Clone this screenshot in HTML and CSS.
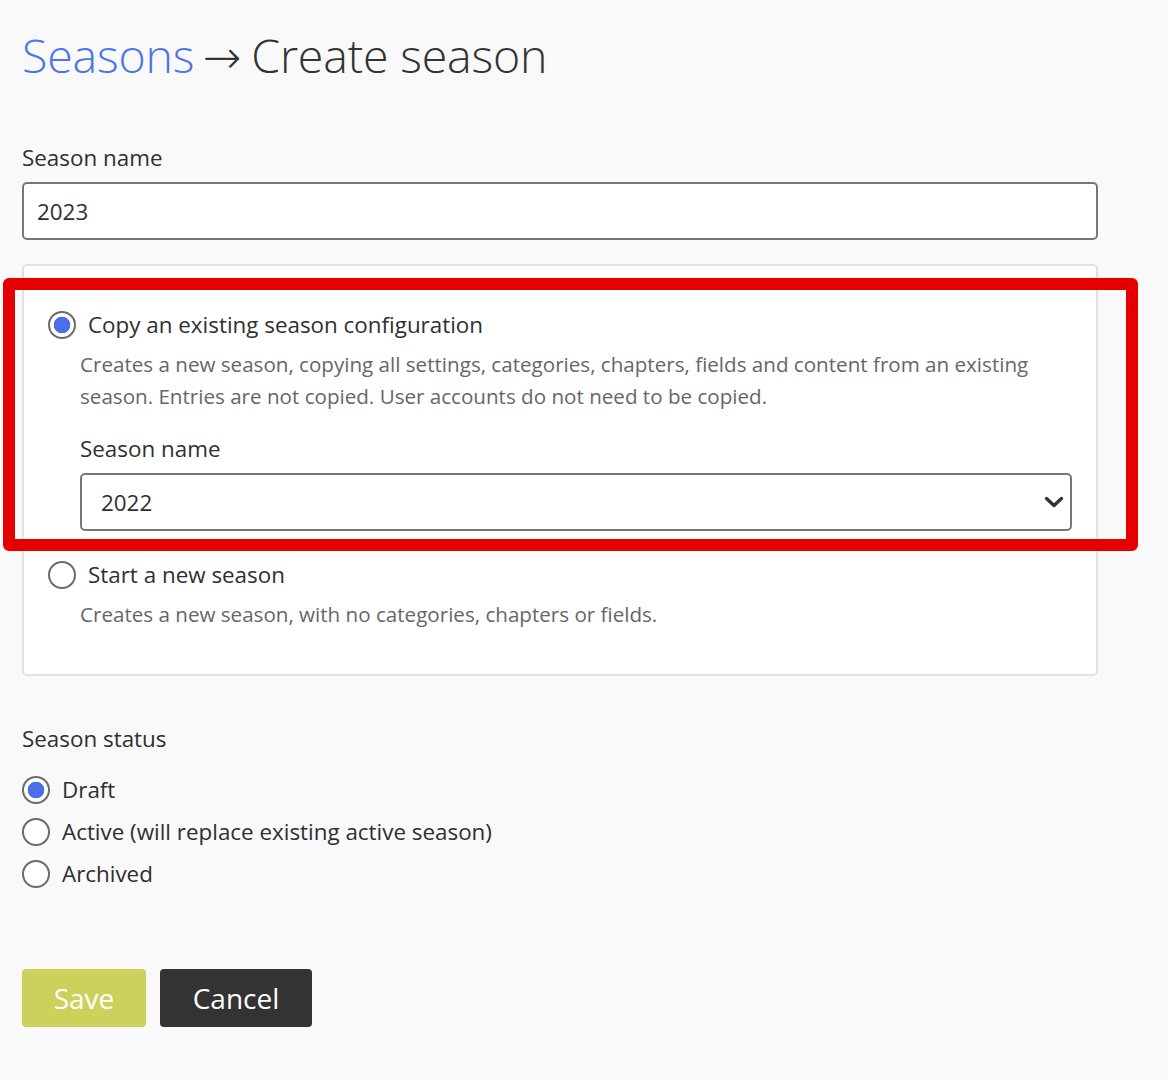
FILE: index.html
```html
<!DOCTYPE html>
<html lang="en">
<head>
<meta charset="utf-8">
<title>Create season</title>
<link rel="stylesheet" href="styles.css">
</head>
<body>
<main class="page">
  <h1 class="title"><a class="crumb" href="#">Seasons</a> <span class="arrow">→</span> Create season</h1>

  <div class="field">
    <label class="label" for="name">Season name</label>
    <input class="input" id="name" type="text" value="2023">
  </div>

  <div class="box">
    <div class="option">
      <label class="radio-row">
        <input class="radio" type="radio" name="mode" checked>
        <span>Copy an existing season configuration</span>
      </label>
      <div class="option-body">
        <p class="desc">Creates a new season, copying all settings, categories, chapters, fields and content from an existing season. Entries are not copied. User accounts do not need to be copied.</p>
        <div class="field sub-field">
          <label class="label" for="copy">Season name</label>
          <div class="select-wrap">
            <select class="select" id="copy">
              <option>2022</option>
            </select>
            <svg class="chevron" width="20" height="14" viewBox="0 0 20 14"><path d="M2.5 3.5 L10 10.5 L17.5 3.5" fill="none" stroke="#333" stroke-width="3.4" stroke-linecap="round" stroke-linejoin="round"/></svg>
          </div>
        </div>
      </div>
    </div>
    <div class="option option-second">
      <label class="radio-row">
        <input class="radio" type="radio" name="mode">
        <span>Start a new season</span>
      </label>
      <div class="option-body">
        <p class="desc">Creates a new season, with no categories, chapters or fields.</p>
      </div>
    </div>
  </div>

  <div class="status">
    <div class="label">Season status</div>
    <div class="status-list">
      <label class="radio-row"><input class="radio" type="radio" name="status" checked><span>Draft</span></label>
      <label class="radio-row"><input class="radio" type="radio" name="status"><span>Active (will replace existing active season)</span></label>
      <label class="radio-row"><input class="radio" type="radio" name="status"><span>Archived</span></label>
    </div>
  </div>

  <div class="actions">
    <button class="btn btn-save" type="button">Save</button>
    <button class="btn btn-cancel" type="button">Cancel</button>
  </div>
</main>
<div class="highlight"></div>
</body>
</html>
```
FILE: styles.css
```css
* { box-sizing: border-box; }

html, body {
  margin: 0;
  background: #f9f9f9;
}

body {
  font-family: "Open Sans", "Noto Sans", sans-serif;
  color: #2f2f2f;
  font-size: 22.4px;
  line-height: 30px;
}

.page {
  padding: 25px 70px 40px 22px;
  width: 1168px;
}

.title {
  margin: 0;
  font-weight: 300;
  font-size: 46.5px;
  line-height: 60px;
  color: #333;
  letter-spacing: -0.2px;
}

.crumb {
  color: #4b74ee;
  text-decoration: none;
}

.arrow {
  font-family: "Noto Sans", "DejaVu Sans", sans-serif;
  font-size: 46px;
  font-weight: 300;
  margin: 0 -2px 0 -3px;
}

.field {
  margin-top: 58px;
  display: flex;
  flex-direction: column;
  gap: 9px;
}

.label {
  display: block;
  font-size: 22.4px;
  line-height: 30px;
  color: #2f2f2f;
}

.input {
  height: 58px;
  width: 100%;
  border: 2px solid #777;
  border-radius: 5px;
  background: #fff;
  padding: 0 13px;
  font-family: inherit;
  font-size: 22.4px;
  color: #2f2f2f;
}

.box {
  margin-top: 24px;
  background: #fff;
  border: 2px solid #e2e2e2;
  border-radius: 5px;
  padding: 44px 24px 44px 24px;
}

.option-second {
  margin-top: 29px;
}

.radio-row {
  display: flex;
  align-items: center;
  gap: 12px;
  font-size: 22.4px;
  line-height: 30px;
  color: #2f2f2f;
}

.radio {
  appearance: none;
  -webkit-appearance: none;
  margin: 0;
  width: 28px;
  height: 28px;
  border: 2px solid #6b6b6b;
  border-radius: 50%;
  background: #fff;
  flex: none;
}

.radio:checked {
  background: radial-gradient(circle, #4a6fe8 0 8px, #fff 8.6px);
}

.option-body {
  margin-left: 32px;
}

.desc {
  margin: 8px 0 0 0;
  font-size: 20.6px;
  line-height: 32px;
  color: #666;
}

.sub-field {
  margin-top: 22px;
}

.select-wrap {
  position: relative;
}

.select {
  appearance: none;
  -webkit-appearance: none;
  width: 100%;
  height: 58px;
  border: 2px solid #777;
  border-radius: 5px;
  background: #fff;
  padding: 0 19px;
  font-family: inherit;
  font-size: 22.4px;
  color: #2f2f2f;
}

.chevron {
  position: absolute;
  right: 8px;
  top: 22px;
  pointer-events: none;
}

.status {
  margin-top: 48px;
}

.status-list {
  margin-top: 21px;
  display: flex;
  flex-direction: column;
  gap: 12px;
}

.actions {
  margin-top: 80px;
  display: flex;
  gap: 14px;
}

.btn {
  height: 58px;
  border: none;
  border-radius: 4px;
  padding: 0;
  font-family: inherit;
  font-size: 28px;
  color: #fff;
}

.btn-save {
  background: #cdd15c;
  width: 124px;
}

.btn-cancel {
  background: #333;
  width: 152px;
}

.highlight {
  position: absolute;
  left: 3px;
  top: 278px;
  width: 1135px;
  height: 273px;
  border: 12px solid #e40000;
  border-radius: 6px;
  pointer-events: none;
}
```
